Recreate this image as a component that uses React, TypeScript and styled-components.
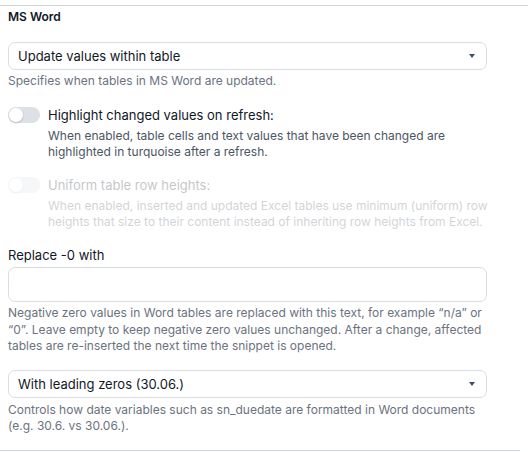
import React from "react";
import styled, { createGlobalStyle } from "styled-components";

const Global = createGlobalStyle`
  html, body {
    margin: 0;
    padding: 0;
    background: #ffffff;
    font-family: Inter, "Noto Sans", sans-serif;
    color: #111827;
  }
  * { box-sizing: border-box; }
`;

const Page = styled.div`
  width: 528px;
  height: 452px;
  overflow: hidden;
  padding-top: 5px;
`;

const Divider = styled.hr`
  margin: 0;
  border: 0;
  border-top: 1px solid #d1d5db;
  width: 528px;
`;

const Section = styled.section`
  border-bottom: 1px solid #d1d5db;
  width: 520px;
  padding: 4px 33px 16px 8px;
`;

const Heading = styled.h3`
  margin: 0;
  font-size: 12px;
  font-weight: 600;
  line-height: 14px;
  color: #111827;
`;

const Field = styled.div<{ $top: number }>`
  margin-top: ${(p) => p.$top}px;
`;

const SelectBox = styled.div`
  height: 28px;
  border: 1px solid #d9dce3;
  border-radius: 7px;
  display: flex;
  align-items: center;
  justify-content: space-between;
  padding: 0 11px 0 9px;
  font-size: 13px;
  color: #111827;
`;

const Caret = styled.span`
  width: 0;
  height: 0;
  border-left: 3.5px solid transparent;
  border-right: 3.5px solid transparent;
  border-top: 4px solid #3f4f63;
`;

const Help = styled.p<{ $lh?: number; $top?: number }>`
  margin: ${(p) => p.$top ?? 3}px 0 0;
  font-size: 12px;
  line-height: ${(p) => p.$lh ?? 16}px;
  color: #6b7280;
`;

const ToggleRow = styled.div<{ $disabled?: boolean; $top: number }>`
  display: flex;
  gap: 8px;
  margin-top: ${(p) => p.$top}px;
  margin-right: -4px;
  opacity: ${(p) => (p.$disabled ? 0.25 : 1)};
`;

const Track = styled.span`
  flex: none;
  width: 32px;
  height: 16px;
  border-radius: 8px;
  background: #dde0e5;
  position: relative;
  margin-top: 1px;
`;

const Knob = styled.span`
  position: absolute;
  left: 1px;
  top: 1px;
  width: 14px;
  height: 14px;
  border-radius: 50%;
  background: #ffffff;
  box-shadow: 0 1px 2px rgba(0, 0, 0, 0.18);
`;

const ToggleText = styled.div`
  display: flex;
  flex-direction: column;
`;

const ToggleLabel = styled.span`
  font-size: 13px;
  line-height: 18px;
  color: #111827;
`;

const ToggleDesc = styled.span`
  margin-top: 4px;
  font-size: 12px;
  line-height: 16px;
  color: #4b5563;
`;

const Label = styled.label`
  display: block;
  font-size: 13px;
  line-height: 16px;
  color: #111827;
`;

const TextInput = styled.input`
  display: block;
  width: 100%;
  height: 35px;
  margin-top: 4px;
  border: 1px solid #d9dce3;
  border-radius: 7px;
  font: inherit;
  font-size: 13px;
  padding: 0 9px;
  outline: none;
`;

const Toggle = ({
  label,
  desc,
  disabled,
  top,
}: {
  label: string;
  desc: string;
  disabled?: boolean;
  top: number;
}) => (
  <ToggleRow $disabled={disabled} $top={top}>
    <Track>
      <Knob />
    </Track>
    <ToggleText>
      <ToggleLabel>{label}</ToggleLabel>
      <ToggleDesc>{desc}</ToggleDesc>
    </ToggleText>
  </ToggleRow>
);

export default function App() {
  return (
    <Page>
      <Global />
      <Divider />
      <Section>
        <Heading>MS Word</Heading>

        <Field $top={18}>
          <SelectBox>
            <span>Update values within table</span>
            <Caret />
          </SelectBox>
          <Help>Specifies when tables in MS Word are updated.</Help>
        </Field>

        <Toggle
          top={17}
          label="Highlight changed values on refresh:"
          desc="When enabled, table cells and text values that have been changed are highlighted in turquoise after a refresh."
        />

        <Toggle
          top={16}
          disabled
          label="Uniform table row heights:"
          desc="When enabled, inserted and updated Excel tables use minimum (uniform) row heights that size to their content instead of inheriting row heights from Excel."
        />

        <Field $top={17}>
          <Label>Replace -0 with</Label>
          <TextInput type="text" />
          <Help $lh={16.5}>
            Negative zero values in Word tables are replaced with this text, for example “n/a” or
            “0”. Leave empty to keep negative zero values unchanged. After a change, affected
            tables are re-inserted the next time the snippet is opened.
          </Help>
        </Field>

        <Field $top={15}>
          <SelectBox>
            <span>With leading zeros (30.06.)</span>
            <Caret />
          </SelectBox>
          <Help $top={4}>
            Controls how date variables such as sn_duedate are formatted in Word documents (e.g.
            30.6. vs 30.06.).
          </Help>
        </Field>
      </Section>
    </Page>
  );
}
